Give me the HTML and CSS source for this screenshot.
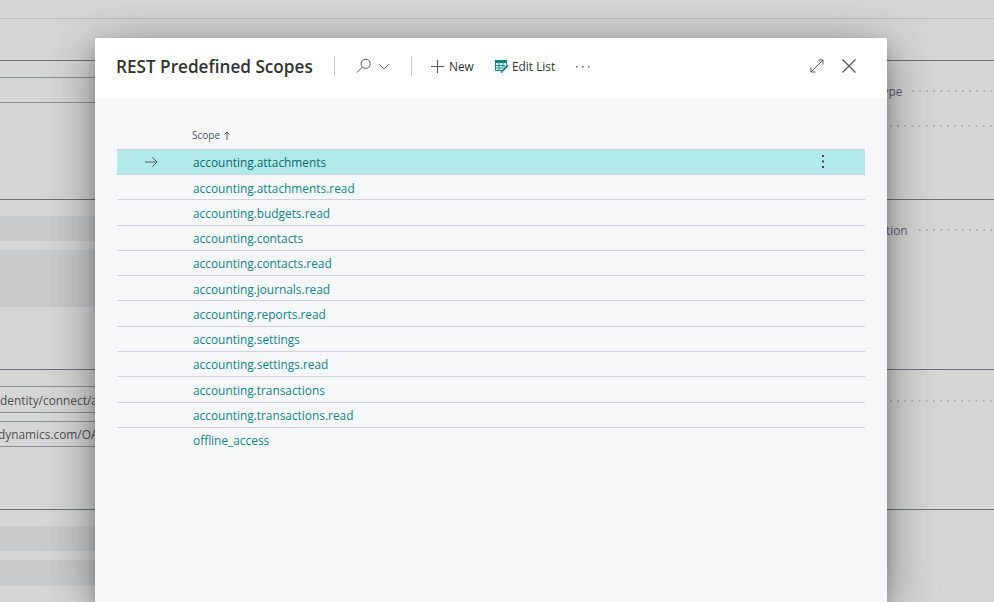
FILE: index.html
```
<!DOCTYPE html>
<html lang="en">
<head>
<meta charset="utf-8">
<title>REST Predefined Scopes</title>
<link rel="stylesheet" href="styles.css">
</head>
<body>
<main class="page">
  <div class="topbar"></div>
  <section class="group g1">
    <div class="col"><div class="field box h26"></div></div>
    <div class="col right">
      <div class="label r1"><span class="w-type"><span class="narrow">Type</span></span><i class="dots"></i></div>
      <div class="label r2"><i class="dots"></i></div>
    </div>
  </section>
  <section class="group g2">
    <div class="col"><div class="field fill h25"></div><div class="field fill h57"></div></div>
    <div class="col right"><div class="label r3"><span class="w-tion"><span class="narrow">tion</span></span><i class="dots"></i></div></div>
  </section>
  <section class="group g3">
    <div class="col"><div class="field box h27"><span class="narrow">dentity/connect/a</span></div><div class="field box h26 tight"><span class="narrow shift">dynamics.com/OA</span></div></div>
    <div class="col right"><div class="label r4"><i class="dots"></i></div></div>
  </section>
  <section class="group g4">
    <div class="col"><div class="field fill h25"></div><div class="field fill h26"></div></div>
    <div class="col right"></div>
  </section>
</main>

<div class="dialog" role="dialog">
  <header class="head">
    <h1><span>REST Predefined Scopes</span></h1>
    <span class="sep s1"></span>
    <svg class="search" width="16" height="16" viewBox="0 0 16 16"><circle cx="9.7" cy="5.8" r="4.6"/><path d="M6.4 9.1 1 14.5"/></svg>
    <svg class="chev" width="12" height="8" viewBox="0 0 12 8"><path d="M1 1.2 6 6.2 11 1.2"/></svg>
    <span class="sep s2"></span>
    <svg class="plus" width="13" height="13" viewBox="0 0 13 13"><path d="M6.5 0V13M0 6.5H13"/></svg>
    <span class="cmd new"><span class="narrow">New</span></span>
    <svg class="edit" width="14" height="13" viewBox="0 0 14 13"><path class="solid" d="M0 0H12V3H0Z"/><path class="grid" d="M.5 3V10.5H7M.5 5.500H11M.5 8H8M4 3V10.5M8 3V8M11.5 3V5"/><path class="halo" d="M7.500 11 12.5 5.500"/><path class="pen" d="M7.300 11 12.800 5.200"/><path class="solid" d="M5.500 13 6.200 10.300 8.200 12.200Z"/></svg>
    <span class="cmd list"><span class="narrow">Edit List</span></span>
    <svg class="more" width="14" height="3" viewBox="0 0 14 3"><path d="M0 1h1.5v1.5H0zM6 1h1.5v1.5H6zM12 1h1.5v1.5H12z"/></svg>
    <svg class="expand" width="14" height="14" viewBox="0 0 14 14"><path d="M1 13 13 1M8.5 1H13V5.5M1 8.5V13H5.500"/></svg>
    <svg class="close" width="14" height="14" viewBox="0 0 14 14"><path d="M.5.5 13.500 13.500M13.500.5.5 13.500"/></svg>
  </header>
  <div class="body">
    <div class="colhead"><span class="name">Scope</span><svg width="6" height="9" viewBox="0 0 6 9"><path d="M3 9V1M.6 3.400 3 1 5.400 3.400"/></svg></div>
    <div class="rows">
      <div class="row sel"><svg class="arrow" width="13" height="12" viewBox="0 0 13 12"><path d="M0 6H12M7.300 1.300 12 6 7.300 10.700"/></svg><a>accounting.attachments</a><svg class="dots3" width="2" height="13" viewBox="0 0 2 13"><path d="M0 0H2V2H0zM0 5.500H2V7.500H0zM0 11H2V13H0z"/></svg></div>
      <div class="row"><a>accounting.attachments.read</a></div>
      <div class="row"><a>accounting.budgets.read</a></div>
      <div class="row"><a>accounting.contacts</a></div>
      <div class="row"><a>accounting.contacts.read</a></div>
      <div class="row"><a>accounting.journals.read</a></div>
      <div class="row"><a>accounting.reports.read</a></div>
      <div class="row"><a>accounting.settings</a></div>
      <div class="row"><a>accounting.settings.read</a></div>
      <div class="row"><a>accounting.transactions</a></div>
      <div class="row"><a>accounting.transactions.read</a></div>
      <div class="row"><a>offline_access</a></div>
    </div>
  </div>
</div>
</body>
</html>
```
FILE: styles.css
```
* { box-sizing: border-box; }
html, body { margin: 0; height: 100%; overflow: hidden; }
body {
  background: #d6d6d6;
  font: 13px/18px "Open Sans", "Noto Sans", sans-serif;
  color: #333;
}
svg { display: block; flex: none; fill: none; stroke: #5a5a5a; stroke-width: 1; }
.narrow, .row a, h1 span, .name {
  display: inline-block;
  white-space: nowrap;
  transform: scaleX(.913);
  transform-origin: 0 50%;
}

/* Dimmed page behind the dialog */
.page { height: 602px; overflow: hidden; }
.topbar { height: 19px; border-bottom: 1px solid #bdbdbd; margin-bottom: 41px; }
.group { display: grid; grid-template-columns: 497px 497px; border-top: 1px solid #6c7180; }
.g1 { height: 139px; }
.g2 { height: 170px; }
.g3 { height: 140px; }
.g4 { height: 93px; }
.col { padding-top: 16px; display: flex; flex-direction: column; gap: 9px; }
.field { flex: none; white-space: nowrap; color: #505050; }
.box { border: solid #8b8f98; border-width: 1px 0; padding-top: 4px; }
.fill { background: #c9cacc; }
.h25 { height: 25px; }
.h26 { height: 26px; }
.h27 { height: 27px; }
.h57 { height: 57px; }
.tight { margin-top: -1px; padding-top: 3px; }
.shift { margin-left: -2px; }
.right { padding: 0 0 0 376px; gap: 0; }
.label { display: flex; align-items: center; height: 18px; flex: none; color: #5b6473; }
.r1 { margin-top: 21px; }
.r2 { margin-top: 17px; padding-left: 17px; }
.r3 { margin-top: 21px; padding-left: 12px; }
.r4 { margin-top: 22px; padding-left: 17px; }
.w-type { width: 39px; padding-left: 3px; }
.w-tion { width: 34px; padding-left: 1px; }
.dots {
  flex: 1;
  height: 2px;
  background: radial-gradient(circle at 1px 1px, #b0b0b0 1px, transparent 1.3px) 0 0 / 7.15px 2px repeat-x;
}

/* Dialog */
.dialog {
  position: absolute;
  left: 95px;
  top: 38px;
  width: 792px;
  bottom: 0;
  background: #f5f7f9;
  border-radius: 2px 2px 0 0;
  box-shadow: 0 6px 14px rgba(0, 0, 0, .16), 0 10px 50px rgba(0, 0, 0, .42);
}
.head {
  display: flex;
  align-items: center;
  height: 60px;
  padding: 0 31px 4px 22px;
  background: #fff;
  border-radius: 2px 2px 0 0;
}
h1 { margin: 0; width: 217px; flex: none; font-size: 18px; line-height: 24px; font-weight: 600; color: #333; }
h1 span { transform: scaleX(.953); margin-left: -1px; }
.sep { width: 1px; height: 20px; background: #c8cad0; flex: none; }
.search { margin-left: 21px; }
.chev { margin: 2px 0 0 6px; }
.s2 { margin-left: 21px; }
.plus { margin-left: 19px; }
.cmd { white-space: nowrap; flex: none; color: #333; }
.new { margin-left: 5px; width: 46px; }
.edit { stroke: none; }
.edit .solid { fill: #0b858b; }
.edit .grid { stroke: #0b858b; }
.edit .halo { stroke: #fff; stroke-width: 3.6; }
.edit .pen { stroke: #0b858b; stroke-width: 2; }
.list { margin-left: 3px; width: 64px; }
.more { fill: #666; stroke: none; }
.expand { margin-left: auto; }
.close { margin-left: 18px; stroke-width: 1.3; }
.body { padding: 28px 22px 0; }
.colhead { display: flex; align-items: center; height: 18px; padding-left: 75px; font-size: 11px; color: #505566; }
.name { width: 32px; }
.rows { margin-top: 4.85px; border-top: 1px solid #cfd2d8; }
.row { display: flex; align-items: center; height: 25.27px; padding-left: 75.5px; border-bottom: 1px solid #d0d3d9; }
.row:last-child { border-bottom-color: transparent; }
.row a { color: #12858a; padding-top: .75px; }
.sel { background: #b2e9eb; padding-left: 28px; }
.row.sel a { color: #08696e; margin-left: 34.5px; }
.dots3 { margin-left: auto; margin-right: 41px; fill: #444; stroke: none; }
```
